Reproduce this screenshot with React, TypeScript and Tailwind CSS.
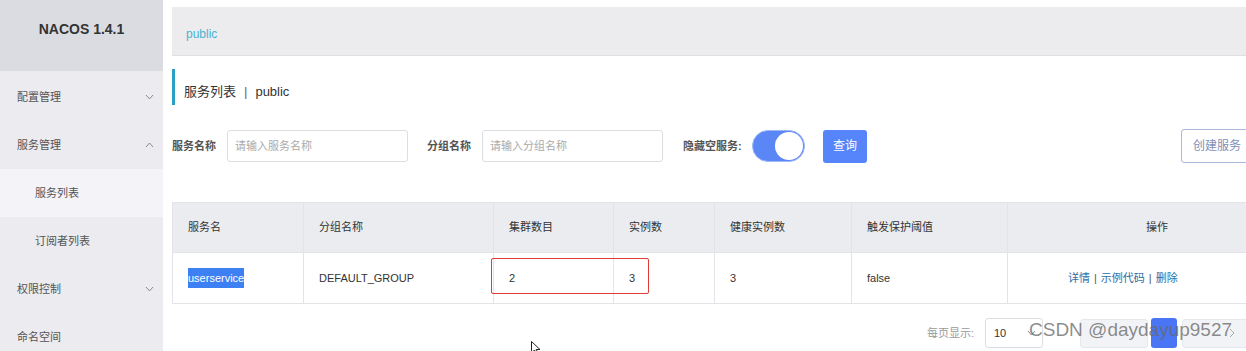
import React from 'react';

const font = { fontFamily: '"Liberation Sans", "Noto Sans CJK SC", sans-serif' };

const Chevron: React.FC<{ up?: boolean }> = ({ up }) => (
  <svg width="9" height="6" viewBox="0 0 9 6" className="text-[#8a8a8f]">
    <polyline
      points={up ? '1,5 4.5,1 8,5' : '1,1 4.5,5 8,1'}
      fill="none"
      stroke="currentColor"
      strokeWidth="1"
    />
  </svg>
);

const MenuItem: React.FC<{ label: string; sub?: boolean; active?: boolean; chevron?: 'up' | 'down' }> = ({
  label,
  sub,
  active,
  chevron,
}) => (
  <div
    className={`h-[48px] shrink-0 flex items-center justify-between pr-[9px] text-[11px] text-[#555] ${
      sub ? 'pl-[35px]' : 'pl-[17px]'
    } ${active ? 'bg-[#f3f3f8]' : ''}`}
  >
    <span>{label}</span>
    {chevron && <Chevron up={chevron === 'up'} />}
  </div>
);

const Sidebar = () => (
  <aside className="w-[163px] shrink-0 h-full bg-[#ebebf0] flex flex-col overflow-hidden">
    <div className="h-[71px] shrink-0 bg-[#dadce2] flex items-center justify-center pb-[12px] text-[14px] font-bold text-[#333]">
      NACOS 1.4.1
    </div>
    <div className="pt-[2px] shrink-0">
      <MenuItem label="配置管理" chevron="down" />
      <MenuItem label="服务管理" chevron="up" />
      <MenuItem label="服务列表" sub active />
      <MenuItem label="订阅者列表" sub />
      <MenuItem label="权限控制" chevron="down" />
      <MenuItem label="命名空间" />
    </div>
  </aside>
);

const cols = [
  { title: '服务名', w: 'w-[131px]' },
  { title: '分组名称', w: 'w-[190px]' },
  { title: '集群数目', w: 'w-[120px]' },
  { title: '实例数', w: 'w-[101px]' },
  { title: '健康实例数', w: 'w-[137px]' },
  { title: '触发保护阈值', w: 'w-[156px]' },
];

const Table = () => (
  <div className="relative w-[1135px] border border-[#e3e4e8] text-[11px] text-[#333]">
    <div className="flex h-[50px] bg-[#ebecf0] border-b border-[#e3e4e8]">
      {cols.map((c) => (
        <div key={c.title} className={`${c.w} shrink-0 flex items-center pl-[15px] border-r border-[#e3e4e8]`}>
          {c.title}
        </div>
      ))}
      <div className="flex-1 flex items-center justify-center">操作</div>
    </div>
    <div className="flex h-[50px] bg-white">
      <div className={`${cols[0].w} shrink-0 flex items-center pl-[15px] border-r border-[#e3e4e8]`}>
        <span className="bg-[#3d80f4] text-white leading-[20px]">userservice</span>
      </div>
      <div className={`${cols[1].w} shrink-0 flex items-center pl-[15px] border-r border-[#e3e4e8]`}>
        DEFAULT_GROUP
      </div>
      <div className={`${cols[2].w} shrink-0 flex items-center pl-[15px] border-r border-[#e3e4e8]`}>2</div>
      <div className={`${cols[3].w} shrink-0 flex items-center pl-[15px] border-r border-[#e3e4e8]`}>3</div>
      <div className={`${cols[4].w} shrink-0 flex items-center pl-[15px] border-r border-[#e3e4e8]`}>3</div>
      <div className={`${cols[5].w} shrink-0 flex items-center pl-[15px] border-r border-[#e3e4e8]`}>false</div>
      <div className="flex-1 flex items-center pl-[60px] text-[#2b6ea8]">
        <span>详情</span>
        <span className="mx-[4px] text-[#555]">|</span>
        <span>示例代码</span>
        <span className="mx-[4px] text-[#555]">|</span>
        <span>删除</span>
      </div>
    </div>
    {/* red annotation box */}
    <div className="absolute left-[318px] top-[55px] w-[158px] h-[36px] border border-[#e53935] rounded-[2px]" />
  </div>
);

export default function App() {
  return (
    <div className="relative w-[1246px] h-[351px] overflow-hidden flex bg-white whitespace-nowrap" style={font}>
      <Sidebar />
      <main className="flex-1 min-w-0 pl-[9px] flex flex-col overflow-hidden">
        <div className="mt-[7px] h-[49px] shrink-0 bg-[#ececef] border-b border-[#e0e0e4] flex items-center pt-[6px] pl-[14px] text-[12px] text-[#4ab3cf]">
          public
        </div>
        <div className="mt-[13px] h-[36px] shrink-0 border-l-[3px] border-[#2aa0c5] flex items-end pb-[4px] pl-[9px] text-[13px] text-[#333]">
          服务列表 <span className="mx-[8px] text-[#666]">|</span> public
        </div>
        <div className="mt-[24px] h-[34px] shrink-0 flex items-center text-[11px]">
          <span className="shrink-0 font-bold text-[#555] w-[44px]">服务名称</span>
          <input
            placeholder="请输入服务名称"
            className="shrink-0 ml-[11px] w-[181px] h-[32px] border border-[#dcdee3] rounded-[3px] px-[7px] outline-none placeholder:text-[#aaa]"
          />
          <span className="shrink-0 ml-[19px] font-bold text-[#555] w-[44px]">分组名称</span>
          <input
            placeholder="请输入分组名称"
            className="shrink-0 ml-[11px] w-[181px] h-[32px] border border-[#dcdee3] rounded-[3px] px-[7px] outline-none placeholder:text-[#aaa]"
          />
          <span className="shrink-0 ml-[20px] w-[59px] font-bold text-[#555]">隐藏空服务:</span>
          <div className="shrink-0 ml-[10px] w-[53px] h-[32px] rounded-full bg-[#5a86f6] border border-[#9fb8f5] flex items-center justify-end pr-[1px]">
            <div className="w-[28px] h-[28px] rounded-full bg-white" />
          </div>
          <button className="shrink-0 ml-[18px] w-[44px] h-[33px] rounded-[3px] bg-[#5584fb] text-white text-[12px]">
            查询
          </button>
          <button className="shrink-0 ml-auto mr-[-4px] w-[69px] h-[34px] rounded-[3px] border border-[#a9b7d8] text-[#7e8fb8] text-[12px] text-left pl-[11px]">
            创建服务
          </button>
        </div>
        <div className="mt-[39px] shrink-0">
          <Table />
        </div>
        <div className="mt-[14px] h-[30px] shrink-0 flex items-center text-[11px]">
          <span className="shrink-0 ml-[755px] w-[48px] text-[#999]">每页显示:</span>
          <div className="ml-[10px] w-[58px] h-[30px] shrink-0 border border-[#dcdee3] rounded-[3px] flex items-center justify-between pl-[8px] pr-[6px] text-[#333]">
            <span>10</span>
            <Chevron />
          </div>
          <div className="ml-[37px] w-[68px] h-[29px] shrink-0 bg-[#f2f3f7] border border-[#e6e7eb] rounded-[3px]" />
          <div className="ml-[3px] w-[26px] h-[30px] shrink-0 bg-[#4a76f6] rounded-[3px]" />
          <div className="ml-[5px] w-[70px] h-[29px] shrink-0 bg-[#f2f3f7] border border-[#e6e7eb] rounded-[3px] flex items-center pl-[46px]">
            <svg width="6" height="10" viewBox="0 0 6 10">
              <polyline points="1,1 5,5 1,9" fill="none" stroke="#aaa" strokeWidth="1" />
            </svg>
          </div>
        </div>
      </main>
      {/* watermark */}
      <div className="absolute left-[1029px] top-[319px] text-[19px] leading-[22px] text-[#666]/75 pointer-events-none">
        CSDN @daydayup9527
      </div>
      {/* mouse cursor */}
      <svg className="absolute left-[531px] top-[341px]" width="10" height="14" viewBox="0 0 10 14">
        <path d="M0.5,0.5 L0.5,12 L3.5,9 L6,13.5 L7.5,12.8 L5.2,8.5 L9,8.5 Z" fill="white" stroke="#222" strokeWidth="1" />
      </svg>
    </div>
  );
}
